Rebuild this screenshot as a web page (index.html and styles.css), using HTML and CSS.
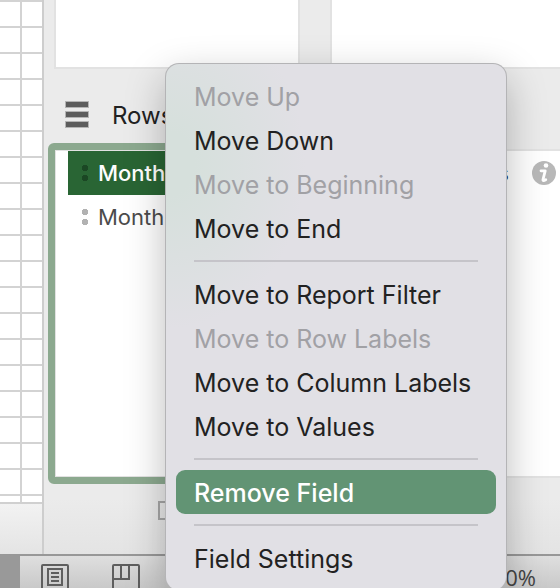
FILE: index.html
```html
<!DOCTYPE html>
<html lang="en">
<head>
<meta charset="utf-8">
<title>PivotTable Fields</title>
<link rel="stylesheet" href="styles.css">
</head>
<body>
<div class="app">
  <main class="workspace">
    <div class="sheet"><div class="cells"></div></div>
    <section class="panel">
      <div class="area area-top"></div>
      <div class="area area-top"></div>
      <h2 class="heading">
        <svg width="26" height="28" viewBox="0 0 26 28" aria-hidden="true"><path fill="#b4b4b4" d="M0 0h24v7H0zM0 10h24v7H0zM0 20h24v7H0z"/><path fill="#5c5c5c" d="M1 1h22v5H1zM1 11h22v5H1zM1 21h22v5H1z"/></svg>
        Rows
      </h2>
      <h2 class="heading"></h2>
      <ul class="area drop">
        <li class="field selected"><span class="grip"></span>Months</li>
        <li class="field"><span class="grip"></span>Month</li>
      </ul>
      <ul class="area values">
        <li class="field value"><span>Sales</span>
          <button class="info" aria-label="Field information"><svg width="24" height="24" viewBox="0 0 24 24"><circle cx="12" cy="12" r="12" fill="#b8b8b8"/><circle cx="14" cy="4.500" r="2.300" fill="#fff"/><path d="M9 9.800h4.200l-2.200 8.700q-.3 1.900 2.800 .2" fill="none" stroke="#fff" stroke-width="2.800" stroke-linejoin="round" stroke-linecap="round"/></svg></button>
        </li>
      </ul>
      <label class="defer"><input type="checkbox" aria-label="Defer layout update"></label>
    </section>
  </main>
  <footer class="status">
    <button class="view" aria-label="Normal view"><svg width="28" height="28" viewBox="0 0 28 28" fill="none" stroke="#5e5e5e" stroke-width="2"><rect x="1" y="1" width="26" height="30" rx="1"/><path d="M7 5h14v16H7zM10 9h8M10 13h8M10 17h8"/></svg></button>
    <button class="view" aria-label="Page layout view"><svg width="28" height="28" viewBox="0 0 28 28" fill="none" stroke="#5e5e5e" stroke-width="2"><rect x="1" y="1" width="26" height="30" rx="1"/><path d="M1 15h16V1M9 1v14"/></svg></button>
    <span class="zoom">100%</span>
  </footer>
  <div class="menu" role="menu">
    <button role="menuitem" disabled>Move Up</button>
    <button role="menuitem">Move Down</button>
    <button role="menuitem" disabled>Move to Beginning</button>
    <button role="menuitem">Move to End</button>
    <hr>
    <button role="menuitem">Move to Report Filter</button>
    <button role="menuitem" disabled>Move to Row Labels</button>
    <button role="menuitem">Move to Column Labels</button>
    <button role="menuitem">Move to Values</button>
    <hr>
    <button role="menuitem" class="active">Remove Field</button>
    <hr>
    <button role="menuitem">Field Settings</button>
  </div>
</div>
</body>
</html>
```
FILE: styles.css
```css
* { box-sizing: border-box; }
body {
  margin: 0;
  font-family: Inter, "Liberation Sans", sans-serif;
  color: #222;
}
button { border: 0; padding: 0; background: none; font: inherit; color: inherit; }
svg { display: block; }
ul { list-style: none; padding: 0; }

.app {
  position: relative;
  display: flex;
  flex-direction: column;
  height: 100vh;
  overflow: hidden;
}
.workspace { flex: 1; display: flex; min-height: 0; }

.sheet {
  width: 44px;
  border-right: 2px solid #cdcdcd;
  background: linear-gradient(#f2f2f2, #e4e4e4) bottom / 100% 50px no-repeat;
}
.cells {
  height: calc(100% - 50px);
  border-bottom: 2px solid #d0d0d0;
  background:
    linear-gradient(#d3d3d3, #d3d3d3) 20px 0 / 2px 100% no-repeat,
    repeating-linear-gradient(#d3d3d3 0 2px, #fff 2px 26px);
}

.panel {
  flex: 1;
  display: grid;
  grid-template-columns: 1fr 1fr;
  grid-template-rows: 69px 80px 1fr 76px;
  column-gap: 30px;
  margin-right: -16px;
  padding-left: 10px;
  background: linear-gradient(#ebebeb 90%, #e4e4e4);
}
.area { margin: 0; background: #fff; border: 2px solid #e2e2e2; }
.area-top { border-top: 0; }
.heading {
  display: flex;
  align-items: center;
  gap: 21px;
  margin: 0;
  padding: 12px 0 0 11px;
  font-size: 24px;
  font-weight: 400;
}
.drop {
  margin: -6px;
  padding-left: 12px;
  border: 7px solid #8ca98f;
  border-radius: 6px;
  box-shadow: inset 0 0 0 1px #e2e2e2;
  padding-top: 1px;
}
.field {
  display: flex;
  align-items: center;
  height: 44px;
  padding-left: 14px;
  font-size: 22px;
  color: #4b4b4b;
}
.drop .field { margin-left: 1px; }
.grip {
  width: 6px;
  height: 16px;
  margin-right: 10px;
  background: radial-gradient(circle at 3px 3px, #b2b2b2 3px, transparent 3px) 0 0 / 6px 10px;
}
.selected { color: #fff; background: #296534; font-weight: 500; }
.selected .grip { background-image: radial-gradient(circle at 3px 3px, #1b4724 3px, transparent 3px); }
.value { justify-content: flex-end; gap: 24px; padding-right: 18px; color: #222; }
.defer {
  display: flex;
  align-items: center;
  grid-column: 1 / -1;
  padding: 0 0 12px 104px;
}
.defer input {
  appearance: none;
  width: 19px;
  height: 19px;
  margin: 0;
  border: 2px solid #a6a6a6;
}

.status {
  display: flex;
  align-items: flex-start;
  gap: 43px;
  height: 34px;
  padding: 8px 24px 0 21px;
  border-top: 2px solid #989898;
  border-left: 20px solid #999;
  background: linear-gradient(#dfdfdf, #c9c9c9);
}
.zoom {
  margin-left: auto;
  font: 22px/26px "Open Sans", sans-serif;
  color: #444;
}

.menu {
  position: absolute;
  top: 64px;
  left: 166px;
  width: 340px;
  padding: 10px;
  border-radius: 13px;
  background: radial-gradient(ellipse 140px 165px at 0 100px, #d6e0dc 20%, transparent) #e1e0e5;
  box-shadow: 0 0 0 1px #b4b4b6, 0 14px 40px rgba(0, 0, 0, .28);
}
.menu button {
  display: block;
  width: 100%;
  height: 44px;
  padding: 0 18px;
  border-radius: 9px;
  font-size: 25px;
  line-height: 46px;
  text-align: left;
  white-space: nowrap;
}
.menu button:disabled { color: #a1a1a5; }
.menu .active { color: #fff; background: #629474; font-weight: 500; }
.menu hr {
  height: 2px;
  margin: 10px 18px;
  border: 0;
  background: #c5c4c9;
}
.value { gap: 23px; }
```
